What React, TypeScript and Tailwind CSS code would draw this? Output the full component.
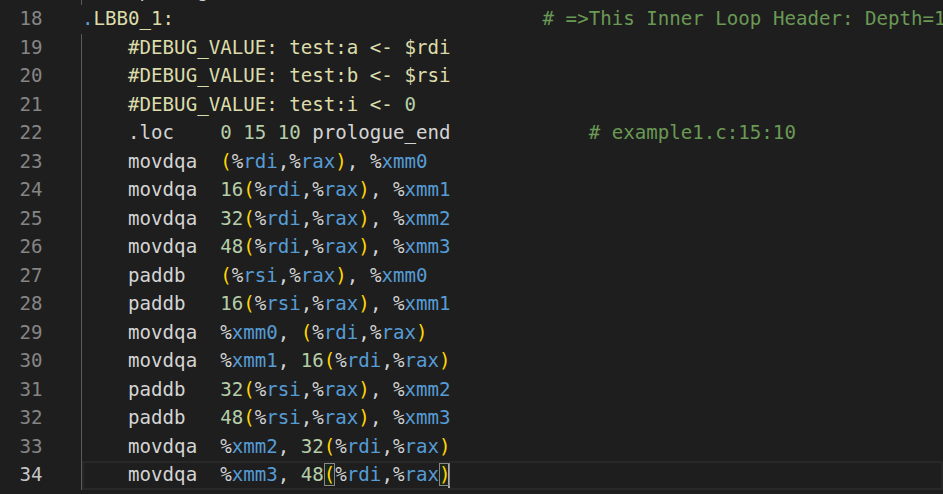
import React from 'react'

type Tok = [string, string]

const W = '#d4d4d4'
const Y = '#dcdcaa'
const B = '#569cd6'
const N = '#b5cea8'
const G = '#6a9955'
const P = '#ffd700'

// split an operand string into coloured tokens
const ops = (s: string): Tok[] => {
    const out: Tok[] = []
    const parts = s.match(/\(|\)|%[a-z0-9]+|0x[0-9a-f]+|\d+|[^()%\d]+/g) || []
    parts.forEach((p) => {
        if (p === '(' || p === ')') out.push([p, P])
        else if (p.startsWith('%')) { out.push(['%', W]); out.push([p.slice(1), B]) }
        else if (/^(0x)?[0-9a-f]+$/.test(p) && /\d/.test(p)) out.push([p, N])
        else out.push([p, W])
    })
    return out
}

const ins = (op: string, args: string): Tok[] => [['    ' + op.padEnd(8, ' '), W], ...ops(args)]

const dbg = (name: string, val: Tok): Tok[] => [
    ['    #DEBUG_VALUE: test:' + name + ' <- ', Y],
    val,
]

const lines: { n: number; guide: boolean; toks: Tok[] }[] = [
    { n: 17, guide: true, toks: [['    .p2align    ', W], ['4', N], [', ', W], ['0x90', N]] },
    { n: 18, guide: false, toks: [['.', B], ['LBB0_1:', Y], [' '.repeat(32), W], ['# =>This Inner Loop Header: Depth=1', G]] },
    { n: 19, guide: true, toks: dbg('a', ['$rdi', Y]) },
    { n: 20, guide: true, toks: dbg('b', ['$rsi', Y]) },
    { n: 21, guide: true, toks: dbg('i', ['0', N]) },
    { n: 22, guide: true, toks: [['    .loc    ', W], ['0 15 10', N], [' prologue_end', W], [' '.repeat(12), W], ['# example1.c:15:10', G]] },
    { n: 23, guide: true, toks: ins('movdqa', '(%rdi,%rax), %xmm0') },
    { n: 24, guide: true, toks: ins('movdqa', '16(%rdi,%rax), %xmm1') },
    { n: 25, guide: true, toks: ins('movdqa', '32(%rdi,%rax), %xmm2') },
    { n: 26, guide: true, toks: ins('movdqa', '48(%rdi,%rax), %xmm3') },
    { n: 27, guide: true, toks: ins('paddb', '(%rsi,%rax), %xmm0') },
    { n: 28, guide: true, toks: ins('paddb', '16(%rsi,%rax), %xmm1') },
    { n: 29, guide: true, toks: ins('movdqa', '%xmm0, (%rdi,%rax)') },
    { n: 30, guide: true, toks: ins('movdqa', '%xmm1, 16(%rdi,%rax)') },
    { n: 31, guide: true, toks: ins('paddb', '32(%rsi,%rax), %xmm2') },
    { n: 32, guide: true, toks: ins('paddb', '48(%rsi,%rax), %xmm3') },
    { n: 33, guide: true, toks: ins('movdqa', '%xmm2, 32(%rdi,%rax)') },
]

const Match = ({ ch }: { ch: string }) => (
    <span className="text-[#ffd700] bg-[#00640019] outline outline-1 -outline-offset-1 outline-[#888888]">{ch}</span>
)

const App = () => {
    return <div className="w-full h-screen overflow-hidden bg-[#1e1e1e] font-['DejaVu_Sans_Mono',monospace] text-[19.14px]">
        {/* editor body */}
        <div className="-mt-[23.5px] flex flex-col">
            {lines.map((l) => (
                <div key={l.n} className="flex h-[28.5px] leading-[28.5px]">
                    <div className="w-[42.5px] text-right text-[#858585] shrink-0">{l.n}</div>
                    <div className="w-[38.5px] shrink-0" />
                    <div className={l.guide ? 'w-px shrink-0 bg-[#5a5a5a]' : 'w-px shrink-0'} />
                    <div className="flex-1 whitespace-pre">
                        {l.toks.map(([t, c], i) => <span key={i} style={{ color: c }}>{t}</span>)}
                    </div>
                </div>
            ))}

            {/* current line */}
            <div className="flex h-[28.5px] leading-[28.5px]">
                <div className="w-[42.5px] text-right text-[#c6c6c6] shrink-0">34</div>
                <div className="w-[38.5px] shrink-0" />
                <div className="w-px shrink-0 bg-[#5a5a5a]" />
                <div className="flex-1 whitespace-pre shadow-[inset_0_0_0_2px_#282828]">
                    <span className="text-[#d4d4d4]">{'    movdqa  %'}</span>
                    <span className="text-[#569cd6]">xmm3</span>
                    <span className="text-[#d4d4d4]">, </span>
                    <span className="text-[#b5cea8]">48</span>
                    <Match ch="(" />
                    <span className="text-[#d4d4d4]">%</span>
                    <span className="text-[#569cd6]">rdi</span>
                    <span className="text-[#d4d4d4]">,%</span>
                    <span className="text-[#569cd6]">rax</span>
                    <Match ch=")" />
                    <span className="inline-block w-[2px] h-[24px] -ml-[2px] align-middle bg-[#aeafad]" />
                </div>
            </div>
        </div>
    </div>
}

export default App
